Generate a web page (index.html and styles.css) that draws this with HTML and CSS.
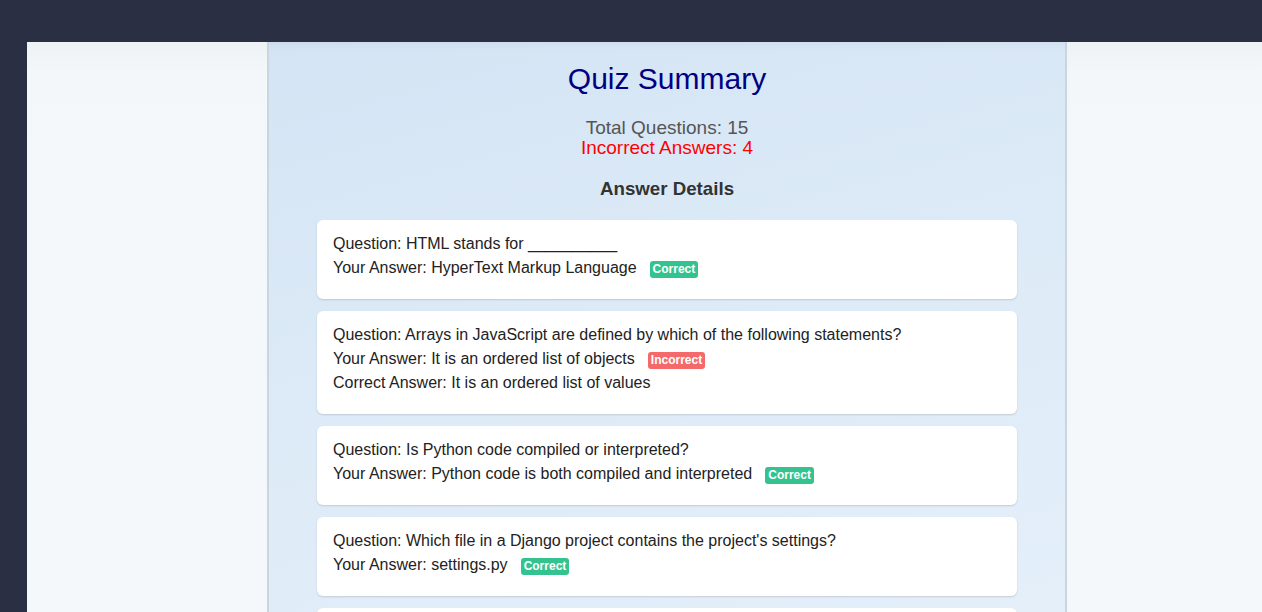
FILE: index.html
```html
<!DOCTYPE html>
<html lang="en">
<head>
<meta charset="utf-8">
<title>Quiz Summary</title>
<link rel="stylesheet" href="styles.css">
</head>
<body>
<div class="page">
  <main class="panel">
    <h1 class="title">Quiz Summary</h1>
    <div class="stats">
      <p class="stat total">Total Questions: 15</p>
      <p class="stat wrong">Incorrect Answers: 4</p>
    </div>
    <h3 class="details-title">Answer Details</h3>
    <div class="list">
      <div class="card">
        <p class="line">Question: HTML stands for __________</p>
        <p class="line">Your Answer: HyperText Markup Language<span class="badge ok">Correct</span></p>
      </div>
      <div class="card">
        <p class="line">Question: Arrays in JavaScript are defined by which of the following statements?</p>
        <p class="line">Your Answer: It is an ordered list of objects<span class="badge bad">Incorrect</span></p>
        <p class="line">Correct Answer: It is an ordered list of values</p>
      </div>
      <div class="card">
        <p class="line">Question: Is Python code compiled or interpreted?</p>
        <p class="line">Your Answer: Python code is both compiled and interpreted<span class="badge ok">Correct</span></p>
      </div>
      <div class="card">
        <p class="line">Question: Which file in a Django project contains the project's settings?</p>
        <p class="line">Your Answer: settings.py<span class="badge ok">Correct</span></p>
      </div>
      <div class="card">
        <p class="line">Question: What does CSS stand for?</p>
        <p class="line">Your Answer: Cascading Style Sheets<span class="badge ok">Correct</span></p>
      </div>
    </div>
  </main>
</div>
</body>
</html>
```
FILE: styles.css
```css
html, body {
  margin: 0;
  padding: 0;
}
body {
  background: #2b2f44;
  height: 612px;
  overflow: hidden;
  font-family: "Liberation Sans", Arial, sans-serif;
}
.page {
  margin: 42px 0 0 27px;
  width: 1280px;
  min-height: 900px;
  background: linear-gradient(to bottom, #edf2f5 0px, #f3f7fa 30px, #f5f9fc 100%);
}
.panel {
  width: 796px;
  margin: 0 auto;
  min-height: 900px;
  padding-top: 20px;
  border-left: 2px solid #c9d5df;
  border-right: 2px solid #c9d5df;
  background: linear-gradient(165deg, #d4e4f4 0%, #dceaf7 30%, #e6f0fa 80%);
  box-shadow: inset 0 8px 10px -8px rgba(40, 60, 90, 0.08);
}
.title {
  margin: 0;
  font-size: 30px;
  font-weight: normal;
  line-height: 34px;
  color: #000080;
  text-align: center;
}
.stats {
  margin-top: 22px;
  text-align: center;
}
.stat {
  margin: 0;
  font-size: 19px;
  line-height: 20px;
}
.total { color: #555555; }
.wrong { color: #ff0000; }
.details-title {
  margin: 20px 0 0;
  font-size: 18.72px;
  font-weight: bold;
  line-height: 22px;
  color: #333333;
  text-align: center;
}
.list {
  margin-top: 20px;
  display: flex;
  flex-direction: column;
  align-items: center;
  gap: 12px;
}
.card {
  box-sizing: border-box;
  width: 700px;
  padding: 14px 16px 21px;
  background: #ffffff;
  border-radius: 6px;
  box-shadow: 0 1px 2px rgba(0, 0, 0, 0.14);
}
.line {
  margin: 0 0 4px;
  font-size: 16px;
  line-height: 20px;
  color: #222222;
}
.line:last-child {
  margin-bottom: 0;
}
.badge {
  display: inline-block;
  margin-left: 13px;
  padding: 2px 3px;
  font-size: 12px;
  font-weight: bold;
  line-height: 13px;
  color: #ffffff;
  border-radius: 3px;
}
.ok { background: #34c38f; }
.bad { background: #f46a6a; }
```
